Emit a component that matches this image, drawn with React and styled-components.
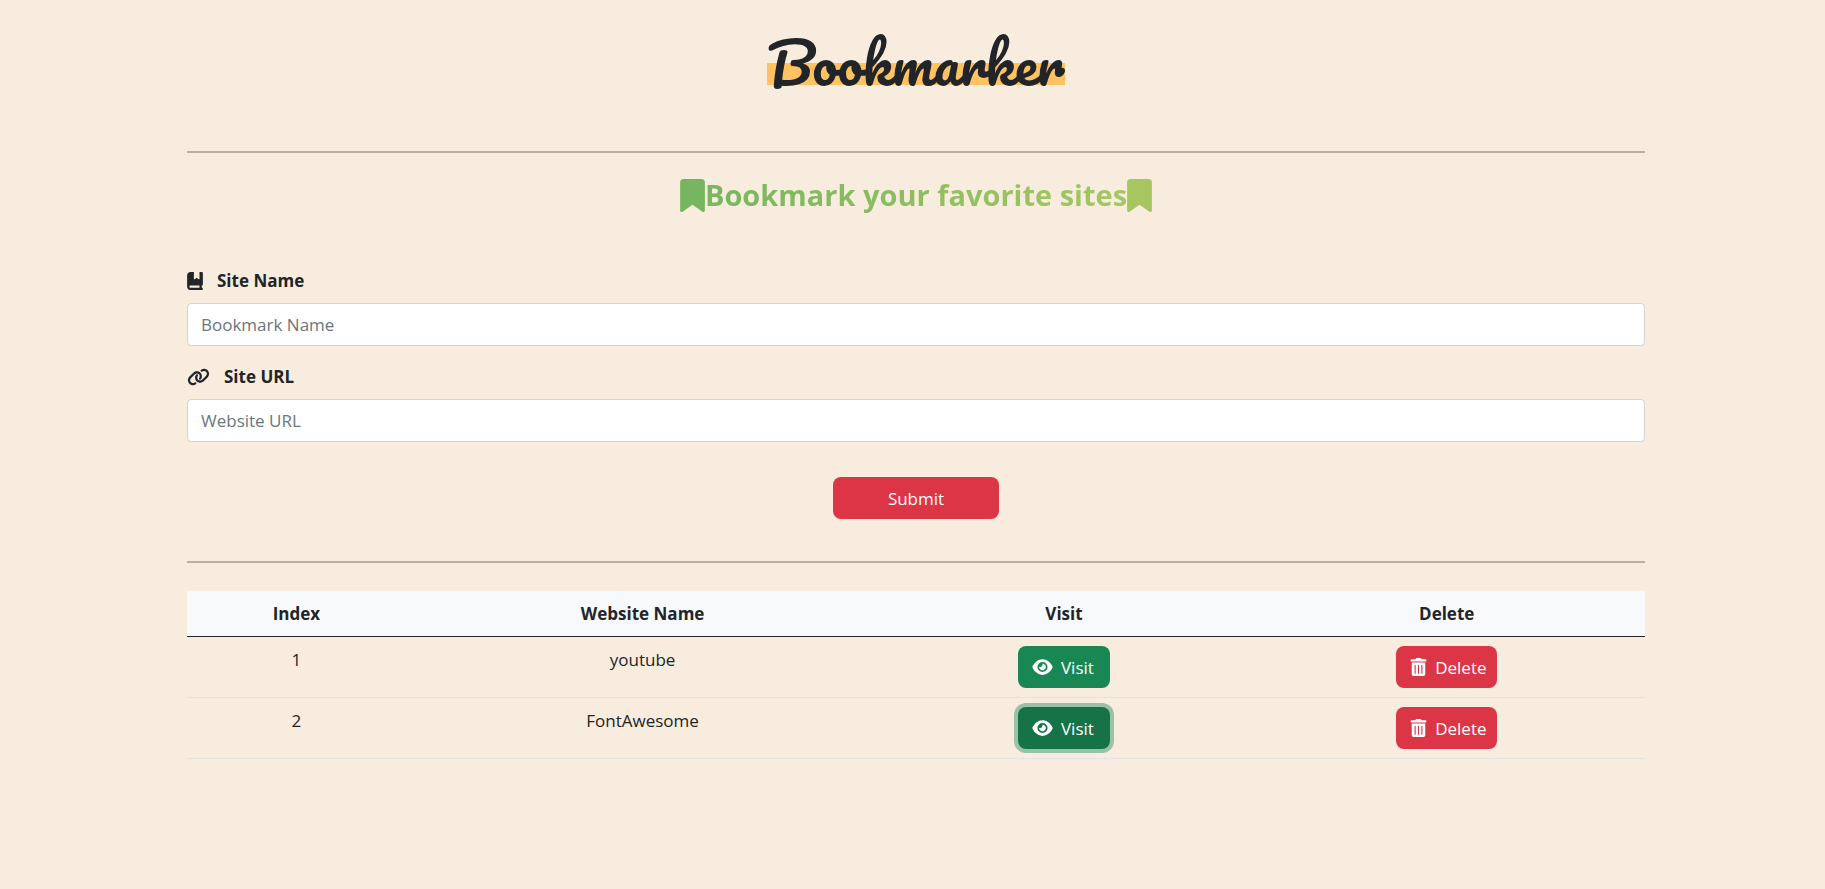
import React from "react";
import styled, { createGlobalStyle } from "styled-components";
import { FaBookBookmark, FaBookmark, FaEye, FaLink } from "react-icons/fa6";
import { FaTrashAlt } from "react-icons/fa";

const GlobalStyle = createGlobalStyle`
  *, *::before, *::after { box-sizing: border-box; }
  body {
    margin: 0;
    background: #f8ecde;
    color: #212529;
    font-family: "Segoe UI", "Open Sans", "Noto Sans", sans-serif;
    font-size: 17px;
    line-height: 27px;
  }
`;

const Page = styled.main`
  padding: 20px 180px 48px 187px;
`;

const Header = styled.header`
  display: flex;
  justify-content: center;
  padding-bottom: 47px;
`;

const Title = styled.h1`
  margin: 0;
  padding: 0 1px;
  font-family: "Pacifico", "Lato", sans-serif;
  font-size: 56px;
  font-weight: 400;
  line-height: 84px;
  background: linear-gradient(#ffc261, #ffc261) 0 43px / 100% 22px no-repeat;
`;

const Rule = styled.hr`
  margin: 0;
  border: 0;
  height: 2px;
  background: #b9b0a4;
`;

const Tagline = styled.h2`
  display: flex;
  align-items: center;
  width: max-content;
  margin: 20px auto 50px;
  font-size: 29px;
  font-weight: 700;
  line-height: 44px;
  color: transparent;
  background: linear-gradient(90deg, #75b55f, #a8c763);
  background-clip: text;
`;

const RibbonIcon = styled(FaBookmark)`
  width: 25px;
  height: 33px;
  color: ${(p) => p.$tone};
`;

const Form = styled.form`
  display: flex;
  flex-direction: column;
  margin-bottom: 42px;
`;

const Field = styled.div`
  display: flex;
  flex-direction: column;
  gap: 9px;
  margin-bottom: 17px;
`;

const Label = styled.label`
  display: flex;
  align-items: center;
  gap: 14px;
  font-weight: 700;

  svg {
    width: ${(p) => p.$iconWidth}px;
    height: 18px;
  }
`;

const Input = styled.input`
  width: 100%;
  height: 43px;
  padding: 0 13px;
  border: 1px solid #ced4da;
  border-radius: 4px;
  background: #fff;
  color: inherit;
  font: inherit;

  &::placeholder { color: #6c757d; opacity: 1; }
`;

const Button = styled.button`
  display: inline-flex;
  align-items: center;
  gap: 8px;
  height: 42px;
  padding: 0 0 0 14px;
  border: 0;
  border-radius: 8px;
  background: ${(p) => p.$color};
  box-shadow: ${(p) => (p.$ring ? "0 0 0 4px rgba(60, 153, 110, 0.5)" : "none")};
  color: #fff;
  font: inherit;
  vertical-align: top;
  cursor: pointer;

  svg { flex: none; height: 18px; }
`;

const SubmitButton = styled(Button)`
  align-self: center;
  justify-content: center;
  width: 166px;
  margin-top: 18px;
  padding: 0;
`;

const VisitButton = styled(Button)`
  width: 92px;

  svg { width: 21px; }
`;

const DeleteButton = styled(Button)`
  width: 101px;

  svg { width: 17px; }
`;

const Table = styled.table`
  width: 100%;
  margin-top: 28px;
  table-layout: fixed;
  border-collapse: separate;
  border-spacing: 0;
  text-align: center;
`;

const Column = styled.col`
  width: ${(p) => p.$width};
`;

const HeadCell = styled.th`
  padding: 9px;
  border-bottom: 1px solid #212529;
  background: #f8f9fb;
  font-weight: 700;
`;

const Cell = styled.td`
  padding: 9px;
  border-bottom: 1px solid #dee2e6;
  vertical-align: top;
`;

const bookmarks = [
  { name: "youtube", focused: false },
  { name: "FontAwesome", focused: true },
];

export default function App() {
  return (
    <>
      <GlobalStyle />
      <Page>
        <Header>
          <Title>Bookmarker</Title>
        </Header>
        <Rule />
        <Tagline>
          <RibbonIcon $tone="#77b660" />
          Bookmark your favorite sites
          <RibbonIcon $tone="#a6c662" />
        </Tagline>
        <Form onSubmit={(e) => e.preventDefault()}>
          <Field>
            <Label htmlFor="site-name" $iconWidth={16}>
              <FaBookBookmark /> Site Name
            </Label>
            <Input id="site-name" type="text" placeholder="Bookmark Name" />
          </Field>
          <Field>
            <Label htmlFor="site-url" $iconWidth={23}>
              <FaLink /> Site URL
            </Label>
            <Input id="site-url" type="text" placeholder="Website URL" />
          </Field>
          <SubmitButton type="submit" $color="#dc3545">Submit</SubmitButton>
        </Form>
        <Rule />
        <Table>
          <colgroup>
            <Column $width="15%" />
            <Column $width="32.5%" />
            <Column $width="25.3%" />
            <Column $width="27.2%" />
          </colgroup>
          <thead>
            <tr>
              <HeadCell scope="col">Index</HeadCell>
              <HeadCell scope="col">Website Name</HeadCell>
              <HeadCell scope="col">Visit</HeadCell>
              <HeadCell scope="col">Delete</HeadCell>
            </tr>
          </thead>
          <tbody>
            {bookmarks.map((b, i) => (
              <tr key={b.name}>
                <Cell>{i + 1}</Cell>
                <Cell>{b.name}</Cell>
                <Cell>
                  <VisitButton type="button" $color={b.focused ? "#157347" : "#198754"} $ring={b.focused}>
                    <FaEye /> Visit
                  </VisitButton>
                </Cell>
                <Cell>
                  <DeleteButton type="button" $color="#dc3545">
                    <FaTrashAlt /> Delete
                  </DeleteButton>
                </Cell>
              </tr>
            ))}
          </tbody>
        </Table>
      </Page>
    </>
  );
}
